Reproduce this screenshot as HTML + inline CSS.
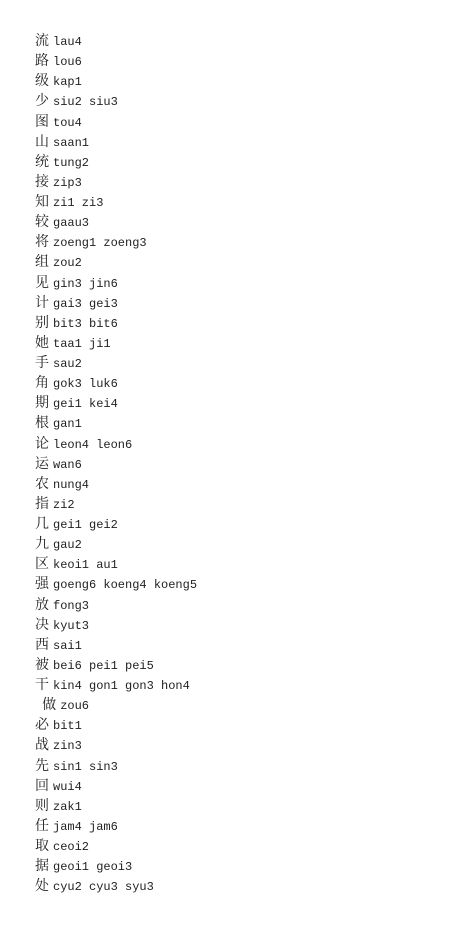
<!DOCTYPE html>
<html><head><meta charset="utf-8"><style>
html,body{margin:0;background:#fff;width:472px;height:936px;overflow:hidden}
.w{position:absolute;left:35px;top:32px;font-family:"Liberation Mono","Noto Serif CJK SC",monospace;font-size:12px;color:#222}
.w div{height:20.14px;line-height:20px;white-space:pre}
.w b{font-weight:normal;font-family:"Noto Serif CJK SC",serif;font-size:14px;line-height:14px;margin-right:4px}
</style></head><body><div class="w"><div><b>流</b>lau4</div><div><b>路</b>lou6</div><div><b>级</b>kap1</div><div><b>少</b>siu2 siu3</div><div><b>图</b>tou4</div><div><b>山</b>saan1</div><div><b>统</b>tung2</div><div><b>接</b>zip3</div><div><b>知</b>zi1 zi3</div><div><b>较</b>gaau3</div><div><b>将</b>zoeng1 zoeng3</div><div><b>组</b>zou2</div><div><b>见</b>gin3 jin6</div><div><b>计</b>gai3 gei3</div><div><b>别</b>bit3 bit6</div><div><b>她</b>taa1 ji1</div><div><b>手</b>sau2</div><div><b>角</b>gok3 luk6</div><div><b>期</b>gei1 kei4</div><div><b>根</b>gan1</div><div><b>论</b>leon4 leon6</div><div><b>运</b>wan6</div><div><b>农</b>nung4</div><div><b>指</b>zi2</div><div><b>几</b>gei1 gei2</div><div><b>九</b>gau2</div><div><b>区</b>keoi1 au1</div><div><b>强</b>goeng6 koeng4 koeng5</div><div><b>放</b>fong3</div><div><b>决</b>kyut3</div><div><b>西</b>sai1</div><div><b>被</b>bei6 pei1 pei5</div><div><b>干</b>kin4 gon1 gon3 hon4</div><div> <b>做</b>zou6</div><div><b>必</b>bit1</div><div><b>战</b>zin3</div><div><b>先</b>sin1 sin3</div><div><b>回</b>wui4</div><div><b>则</b>zak1</div><div><b>任</b>jam4 jam6</div><div><b>取</b>ceoi2</div><div><b>据</b>geoi1 geoi3</div><div><b>处</b>cyu2 cyu3 syu3</div></div></body></html>
